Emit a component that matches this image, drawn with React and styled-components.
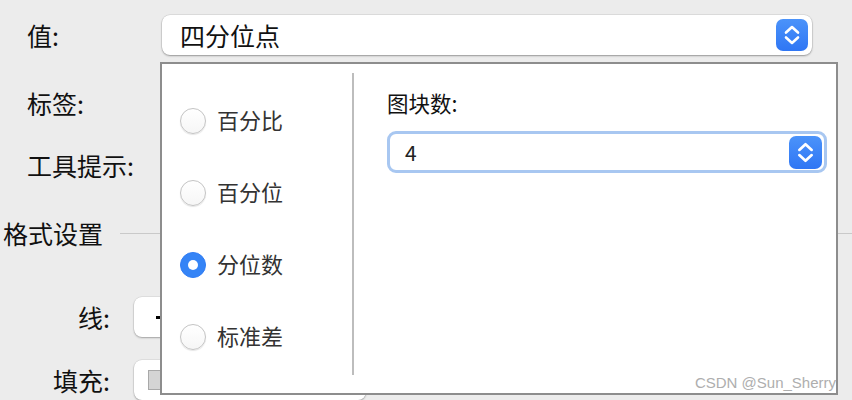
import React from "react";
import styled, { createGlobalStyle } from "styled-components";

const Global = createGlobalStyle`
  html, body { margin: 0; padding: 0; }
  body {
    background: #ececec;
    font-family: "Noto Sans CJK SC", "Noto Sans", sans-serif;
    color: #111;
    overflow: hidden;
  }
`;

const Page = styled.div`
  position: relative;
  width: 852px;
  height: 400px;
  overflow: hidden;
  padding-top: 15px;
  box-sizing: border-box;
`;

const Row = styled.div`
  display: flex;
  align-items: center;
  height: 40px;
  margin-top: ${(p) => p.$mt || 0}px;
  padding-left: ${(p) => p.$pl || 0}px;
`;

const Label = styled.div`
  width: ${(p) => p.$w}px;
  flex: none;
  font-size: 25px;
  line-height: 40px;
  text-align: ${(p) => (p.$right ? "right" : "left")};
  margin-right: ${(p) => p.$mr || 0}px;
`;

const Select = styled.div`
  width: ${(p) => p.$w}px;
  height: 40px;
  box-sizing: border-box;
  background: #fff;
  border-radius: 8px;
  box-shadow: 0 1px 2px rgba(0, 0, 0, 0.32), 0 0 0 0.5px rgba(0, 0, 0, 0.12);
  display: flex;
  align-items: center;
  padding: 0 4px 0 18px;
  font-size: 25px;
`;

const SelectText = styled.span`
  flex: 1;
`;

const Stepper = styled.div`
  width: ${(p) => p.$s}px;
  height: ${(p) => p.$s}px;
  border-radius: 7px;
  background: linear-gradient(#4b93fa, #2f76f4);
  display: flex;
  align-items: center;
  justify-content: center;
  flex: none;
`;

const Header = styled.div`
  display: flex;
  align-items: center;
  margin-top: 36px;
  padding-left: 3px;
  height: 24px;
`;

const HeaderText = styled.span`
  font-size: 25px;
  line-height: 24px;
`;

const HeaderLine = styled.div`
  flex: 1;
  height: 1px;
  background: #c9c9c9;
  margin-left: 17px;
`;

const SmallControl = styled.div`
  width: ${(p) => p.$w}px;
  height: 40px;
  background: #fff;
  border-radius: 8px;
  box-shadow: 0 1px 2px rgba(0, 0, 0, 0.28), 0 0 0 0.5px rgba(0, 0, 0, 0.1);
  display: flex;
  align-items: center;
  padding: 0 7px 0 14px;
  box-sizing: border-box;
  gap: 8px;
`;

const Dash = styled.span`
  width: 60px;
  height: 3px;
  background: #000;
  margin-left: 8px;
`;

const Swatch = styled.span`
  width: 40px;
  height: 18px;
  background: #d4d4d4;
  border: 1px solid #a8a8a8;
`;

const Popup = styled.div`
  position: absolute;
  left: 160px;
  top: 62px;
  width: 678px;
  height: 333px;
  box-sizing: border-box;
  background: #fff;
  border: 2px solid #8d8d8d;
  display: flex;
`;

const RadioCol = styled.div`
  width: 190px;
  flex: none;
  display: flex;
  flex-direction: column;
  gap: 46px;
  padding: 44px 0 0 18px;
  box-sizing: border-box;
`;

const RadioItem = styled.label`
  display: flex;
  align-items: center;
  height: 26px;
  gap: 11px;
  font-size: 22px;
  color: #333;
`;

const RadioText = styled.span`
  line-height: 26px;
  margin-top: -4px;
`;

const Circle = styled.span`
  width: 26px;
  height: 26px;
  box-sizing: border-box;
  border-radius: 50%;
  flex: none;
  display: flex;
  align-items: center;
  justify-content: center;
  background: ${(p) => (p.$on ? "#3584f6" : "linear-gradient(#fff, #f6f6f6)")};
  border: 1px solid ${(p) => (p.$on ? "#2f7cf4" : "#c4c4c4")};
  box-shadow: ${(p) => (p.$on ? "none" : "0 1px 1px rgba(0,0,0,0.1)")};
`;

const Dot = styled.span`
  width: 10px;
  height: 10px;
  border-radius: 50%;
  background: #fff;
`;

const Divider = styled.div`
  width: 2px;
  flex: none;
  background: #bdbdbd;
  margin: 9px 0 18px;
`;

const RightCol = styled.div`
  flex: 1;
  padding: 26px 0 0 33px;
  display: flex;
  flex-direction: column;
`;

const FieldLabel = styled.div`
  font-size: 21.5px;
  line-height: 26px;
  height: 26px;
`;

const Input = styled.div`
  margin-top: 15px;
  width: 440px;
  height: 42px;
  box-sizing: border-box;
  border: 3px solid #a8c7f1;
  border-radius: 9px;
  background: #fff;
  display: flex;
  align-items: center;
  padding: 0 2px 0 15px;
  font-size: 21px;
  color: #222;
`;

const InputText = styled.span`
  flex: 1;
`;

const Watermark = styled.div`
  position: absolute;
  right: 0;
  bottom: 2px;
  font-family: "Liberation Sans", Arial, sans-serif;
  font-size: 15px;
  color: #aeaeae;
`;

const Chevrons = ({ size }) => (
  <svg width={size} height={size} viewBox="0 0 32 32">
    <path
      d="M10 13.5 L16 8 L22 13.5 M10 18.5 L16 24 L22 18.5"
      fill="none"
      stroke="#fff"
      strokeWidth="2.6"
      strokeLinecap="round"
      strokeLinejoin="round"
    />
  </svg>
);

const options = ["百分比", "百分位", "分位数", "标准差"];

export default function App() {
  return (
    <>
      <Global />
      <Page>
        <Row $pl={27}>
          <Label $w={135}>值:</Label>
          <Select $w={650}>
            <SelectText>四分位点</SelectText>
            <Stepper $s={32}>
              <Chevrons size={32} />
            </Stepper>
          </Select>
        </Row>
        <Row $pl={27} $mt={28}>
          <Label $w={135}>标签:</Label>
          <Select $w={650} />
        </Row>
        <Row $pl={27} $mt={22}>
          <Label $w={135}>工具提示:</Label>
          <Select $w={650} />
        </Row>
        <Header>
          <HeaderText>格式设置</HeaderText>
          <HeaderLine />
        </Header>
        <Row $mt={52}>
          <Label $w={110} $right $mr={24}>线:</Label>
          <SmallControl $w={232}>
            <Dash />
          </SmallControl>
        </Row>
        <Row $mt={23}>
          <Label $w={110} $right $mr={24}>填充:</Label>
          <SmallControl $w={232}>
            <Swatch />
          </SmallControl>
        </Row>

        <Popup>
          <RadioCol>
            {options.map((o, i) => (
              <RadioItem key={o}>
                <Circle $on={i === 2}>{i === 2 && <Dot />}</Circle>
                <RadioText>{o}</RadioText>
              </RadioItem>
            ))}
          </RadioCol>
          <Divider />
          <RightCol>
            <FieldLabel>图块数:</FieldLabel>
            <Input>
              <InputText>4</InputText>
              <Stepper $s={33}>
                <Chevrons size={33} />
              </Stepper>
            </Input>
          </RightCol>
          <Watermark>CSDN @Sun_Sherry</Watermark>
        </Popup>
      </Page>
    </>
  );
}
